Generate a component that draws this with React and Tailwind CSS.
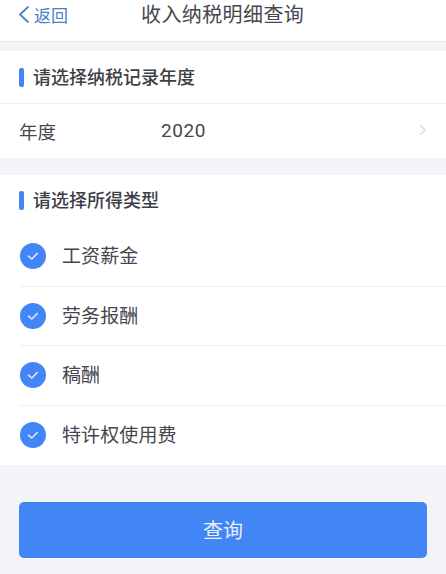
import React from "react";

const font = "font-['Noto_Sans_CJK_SC','Liberation_Sans',sans-serif]";

function SectionTitle({ text, className }) {
  return (
    <div className={`flex items-center gap-[9px] pl-[19px] ${className}`}>
      <div className="w-[5px] h-[19px] rounded-[2px] bg-[#4285f4]"></div>
      <div className="text-[18px] leading-[24px] mb-[2px] font-medium text-[#3c3f46]">{text}</div>
    </div>
  );
}

function CheckRow({ label, line }) {
  return (
    <div className="pl-[19px]">
      <div
        className={`flex items-center gap-[16px] pl-[1px] h-[59.5px] ${
          line ? "border-b border-[#eeeff1]" : ""
        }`}
      >
        <div className="w-[26px] h-[26px] rounded-full bg-[#4285f4] flex items-center justify-center">
          <svg width="14" height="14" viewBox="0 0 14 14" fill="none">
            <path
              d="M2.5 7.2 L5.8 10 L11.2 4.5"
              stroke="#dfe9fd"
              strokeWidth="1.6"
              strokeLinecap="round"
              strokeLinejoin="round"
            />
          </svg>
        </div>
        <div className="text-[19px] leading-[24px] mb-[2px] tracking-[0.1px] text-[#45474d]">{label}</div>
      </div>
    </div>
  );
}

export default function App() {
  return (
    <div className={`w-[446px] h-[574px] overflow-hidden bg-[#f3f4f8] ${font}`}>
      <div className="h-[42px] bg-white border-b border-[#e6e7ea] flex items-center relative">
        <div className="flex items-center pl-[18px] pb-[11px] text-[#4a80c9]">
          <svg width="14" height="20" viewBox="0 0 14 20" fill="none">
            <path d="M10 2 L2 9.5 L10 17" stroke="#4a80d0" strokeWidth="1.8" strokeLinecap="round" strokeLinejoin="round" />
          </svg>
          <span className="text-[17px] leading-[22px] ml-[2px]">返回</span>
        </div>
        <div className="absolute left-[141px] top-0 text-[20px] leading-[28px] tracking-[0.4px] text-[#45474d]">收入纳税明细查询</div>
      </div>

      <div className="mt-[9px] bg-white">
        <SectionTitle text="请选择纳税记录年度" className="h-[53px] border-b border-[#eeeff1]" />
        <div className="h-[54px] flex items-center pl-[19px] pr-[19px] text-[#45474d]">
          <div className="w-[142px] text-[18.5px] leading-[24px]">年度</div>
          <div className="text-[19px] font-['Roboto','Liberation_Sans',sans-serif] tracking-[0.6px]">2020</div>
          <svg className="ml-auto mb-[3px]" width="8" height="12" viewBox="0 0 8 12" fill="none">
            <path d="M1.5 1.5 L6 6 L1.5 10.5" stroke="#d8dade" strokeWidth="1.4" strokeLinecap="round" strokeLinejoin="round" />
          </svg>
        </div>
      </div>

      <div className="mt-[17px] bg-white h-[290px]">
        <SectionTitle text="请选择所得类型" className="h-[50px]" />
        <div className="pt-[2px]">
          <CheckRow label="工资薪金" line />
          <CheckRow label="劳务报酬" line />
          <CheckRow label="稿酬" line />
          <CheckRow label="特许权使用费" />
        </div>
      </div>

      <div className="mt-[37px] mx-[19px] h-[56px] w-[408px] rounded-[5px] bg-[#4285f4] flex items-center justify-center text-[20px] text-[#e8effd]">
        查询
      </div>
    </div>
  );
}
